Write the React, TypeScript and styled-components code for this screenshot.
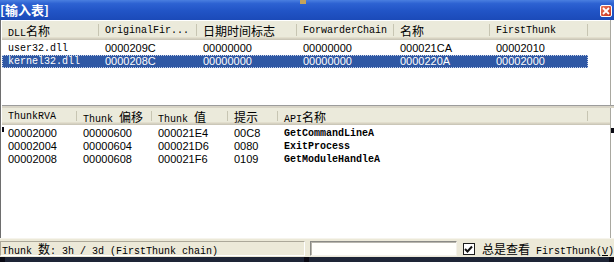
import React from 'react';
import styled, { createGlobalStyle } from 'styled-components';

const GlobalStyle = createGlobalStyle`
  html, body { margin: 0; padding: 0; background: #ece9d8; }
  * { box-sizing: border-box; }
`;

type Font = 'mono' | 'hex' | 'api';

interface Column {
  title: React.ReactNode;
  width: number;
  font: Font;
}

const Window = styled.div`
  position: relative;
  width: 614px;
  height: 262px;
  display: flex;
  flex-direction: column;
  background: #ece9d8;
  overflow: hidden;
  font-family: 'Liberation Mono', 'Noto Sans CJK SC', monospace;
  font-size: 10px;
  color: #000;
`;

const TitleBar = styled.div`
  height: 20px;
  flex: none;
  display: flex;
  align-items: center;
  justify-content: space-between;
  padding-right: 2px;
  background: linear-gradient(#4a7fe0 0%, #2d62d2 18%, #2154c6 55%, #1b4ab8 100%);
`;

const Title = styled.span`
  color: #fff;
  font-family: 'Noto Sans CJK SC', sans-serif;
  font-weight: bold;
  font-size: 13px;
  line-height: 20px;
`;

const CloseBtn = styled.div`
  width: 12px;
  height: 12px;
  margin-top: 2px;
  border: 1px solid #fff;
  border-radius: 2px;
  background: linear-gradient(135deg, #e8755a, #c8321c);
  display: flex;
  align-items: center;
  justify-content: center;
`;

const Body = styled.div`
  flex: 1;
  display: flex;
  flex-direction: column;
  background: #fff;
  border-left: 1px solid #6e6e6e;
  padding-left: 1px;
  padding-right: 3px;
`;

const ListPane = styled.div<{ $height?: number }>`
  ${(p) => (p.$height ? `height: ${p.$height}px; flex: none;` : 'flex: 1;')}
  display: flex;
  flex-direction: column;
  background: #fff;
  border-right: 1px solid #a9a8a0;
  overflow: hidden;
`;

const HeaderRow = styled.div<{ $h: number; $top: number }>`
  display: flex;
  flex: none;
  height: ${(p) => p.$h}px;
  margin-top: ${(p) => p.$top}px;
  margin-bottom: 2px;
  background: #ebeadb;
  box-shadow: inset 0 -1px #cbc7b8, inset 0 -2px #d6d2c2, inset 0 -3px #e2decd;
`;

const HeaderCell = styled.div<{ $w?: number; $h: number }>`
  position: relative;
  ${(p) => (p.$w ? `width: ${p.$w}px; flex: none;` : 'flex: 1;')}
  padding-left: 6px;
  line-height: ${(p) => p.$h}px;
  white-space: pre;
  overflow: hidden;
  &::after {
    content: '';
    position: absolute;
    right: 0;
    top: 3px;
    bottom: 4px;
    width: 1px;
    background: #c7c5b2;
    box-shadow: 1px 0 #fff;
    display: ${(p) => (p.$w ? 'block' : 'none')};
  }
`;

const Cjk = styled.span`
  font-family: 'Noto Sans CJK SC', sans-serif;
  font-size: 12px;
`;

const Row = styled.div<{ $selected?: boolean }>`
  display: flex;
  width: 586px;
  height: 13px;
  align-items: center;
  background: ${(p) => (p.$selected ? '#2f58a4' : 'transparent')};
  color: ${(p) => (p.$selected ? '#fff' : '#000')};
  outline: ${(p) => (p.$selected ? '1px dotted #c9d3e8' : 'none')};
  outline-offset: -1px;
`;

const Cell = styled.div<{ $w: number; $font: Font }>`
  width: ${(p) => p.$w}px;
  flex: none;
  padding-left: 6px;
  white-space: nowrap;
  overflow: hidden;
  line-height: 13px;
  font-family: ${(p) =>
    p.$font === 'hex' ? "'Liberation Sans', sans-serif" : "'Liberation Mono', monospace"};
  font-size: ${(p) => (p.$font === 'hex' ? '11px' : '10px')};
  font-weight: ${(p) => (p.$font === 'api' ? 'bold' : 'normal')};
`;

const Splitter = styled.div`
  height: 3px;
  flex: none;
  border-top: 1px solid #9c9c9c;
  background: #d8d4c6;
  margin-right: -4px;
`;

const StatusBar = styled.div`
  height: 19px;
  flex: none;
  display: flex;
  align-items: center;
  border-top: 1px solid #f6f4ec;
  padding-top: 1px;
`;

const StatusText = styled.div`
  width: 305px;
  height: 15px;
  border: 1px solid;
  border-color: #aca899 #fff #fff #aca899;
  line-height: 13px;
  padding-left: 1px;
  white-space: pre;
`;

const EditBox = styled.div`
  width: 147px;
  height: 15px;
  margin-left: 5px;
  background: #fffffb;
  border: 1px solid;
  border-color: #8a8a84 #f4f2ea #f4f2ea #8a8a84;
  box-shadow: inset 1px 1px #b8b6ac;
`;

const CheckWrap = styled.label`
  display: flex;
  align-items: center;
  margin-left: 6px;
  gap: 7px;
  white-space: pre;
`;

const CheckBox = styled.div`
  width: 12px;
  height: 12px;
  border: 1px solid #1c1c1c;
  background: #fff;
  display: flex;
  align-items: center;
  justify-content: center;
`;

const Mnemonic = styled.span`
  text-decoration: underline;
`;

const BottomEdge = styled.div`
  height: 5px;
  flex: none;
  background: #1e2536;
`;

const Grip = styled.div<{ $x: number; $y: number; $w: number; $h: number; $c?: string }>`
  position: absolute;
  left: ${(p) => p.$x}px;
  top: ${(p) => p.$y}px;
  width: ${(p) => p.$w}px;
  height: ${(p) => p.$h}px;
  background: ${(p) => p.$c ?? '#0a0a14'};
`;

const importCols: Column[] = [
  { title: <>DLL<Cjk>名称</Cjk></>, width: 97, font: 'mono' },
  { title: 'OriginalFir...', width: 98, font: 'hex' },
  { title: <Cjk>日期时间标志</Cjk>, width: 100, font: 'hex' },
  { title: 'ForwarderChain', width: 97, font: 'hex' },
  { title: <Cjk>名称</Cjk>, width: 96, font: 'hex' },
  { title: 'FirstThunk', width: 98, font: 'hex' },
];

const importRows = [
  ['user32.dll', '0000209C', '00000000', '00000000', '000021CA', '00002010'],
  ['kernel32.dll', '0000208C', '00000000', '00000000', '0000220A', '00002000'],
];

const thunkCols: Column[] = [
  { title: 'ThunkRVA', width: 75, font: 'hex' },
  { title: <>{'Thunk '}<Cjk>偏移</Cjk></>, width: 75, font: 'hex' },
  { title: <>{'Thunk '}<Cjk>值</Cjk></>, width: 76, font: 'hex' },
  { title: <Cjk>提示</Cjk>, width: 50, font: 'hex' },
  { title: <>API<Cjk>名称</Cjk></>, width: 310, font: 'api' },
];

const thunkRows = [
  ['00002000', '00000600', '000021E4', '00C8', 'GetCommandLineA'],
  ['00002004', '00000604', '000021D6', '0080', 'ExitProcess'],
  ['00002008', '00000608', '000021F6', '0109', 'GetModuleHandleA'],
];

const ListView: React.FC<{
  columns: Column[];
  rows: string[][];
  headerHeight: number;
  headerTop: number;
  selected?: number;
  height?: number;
}> = ({ columns, rows, headerHeight, headerTop, selected, height }) => (
  <ListPane $height={height}>
    <HeaderRow $h={headerHeight} $top={headerTop}>
      {columns.map((c, i) => (
        <HeaderCell key={i} $w={c.width} $h={headerHeight}>
          {c.title}
        </HeaderCell>
      ))}
      <HeaderCell $h={headerHeight} />
    </HeaderRow>
    {rows.map((r, ri) => (
      <Row key={ri} $selected={ri === selected}>
        {r.map((v, ci) => (
          <Cell key={ci} $w={columns[ci].width} $font={columns[ci].font}>
            {v}
          </Cell>
        ))}
      </Row>
    ))}
  </ListPane>
);

export default function App() {
  return (
    <Window>
      <GlobalStyle />
      <TitleBar>
        <Title>[输入表]</Title>
        <CloseBtn>
          <svg width="8" height="8" viewBox="0 0 8 8">
            <path d="M1 1L7 7M7 1L1 7" stroke="#fff" strokeWidth="1.8" />
          </svg>
        </CloseBtn>
      </TitleBar>
      <Body>
        <ListView
          columns={importCols}
          rows={importRows}
          headerHeight={19}
          headerTop={1}
          selected={1}
          height={85}
        />
        <Splitter />
        <ListView columns={thunkCols} rows={thunkRows} headerHeight={17} headerTop={0} />
      </Body>
      <StatusBar>
        <StatusText>
          {'Thunk '}<Cjk>数</Cjk>{': 3h / 3d (FirstThunk chain)'}
        </StatusText>
        <EditBox />
        <CheckWrap>
          <CheckBox>
            <svg width="9" height="8" viewBox="0 0 9 8">
              <path d="M1 4L3.5 6.5L8 1.5" stroke="#111" strokeWidth="2" fill="none" />
            </svg>
          </CheckBox>
          <span>
            <Cjk>总是查看</Cjk>{' FirstThunk('}<Mnemonic>V</Mnemonic>)
          </span>
        </CheckWrap>
      </StatusBar>
      <BottomEdge />
      <Grip $x={300} $y={0} $w={6} $h={4} $c="#c4a35a" />
      <Grip $x={2} $y={127} $w={2} $h={5} />
      <Grip $x={611} $y={128} $w={3} $h={5} />
      <Grip $x={0} $y={257} $w={5} $h={5} />
      <Grip $x={304} $y={257} $w={5} $h={5} />
      <Grip $x={609} $y={257} $w={5} $h={5} />
    </Window>
  );
}
